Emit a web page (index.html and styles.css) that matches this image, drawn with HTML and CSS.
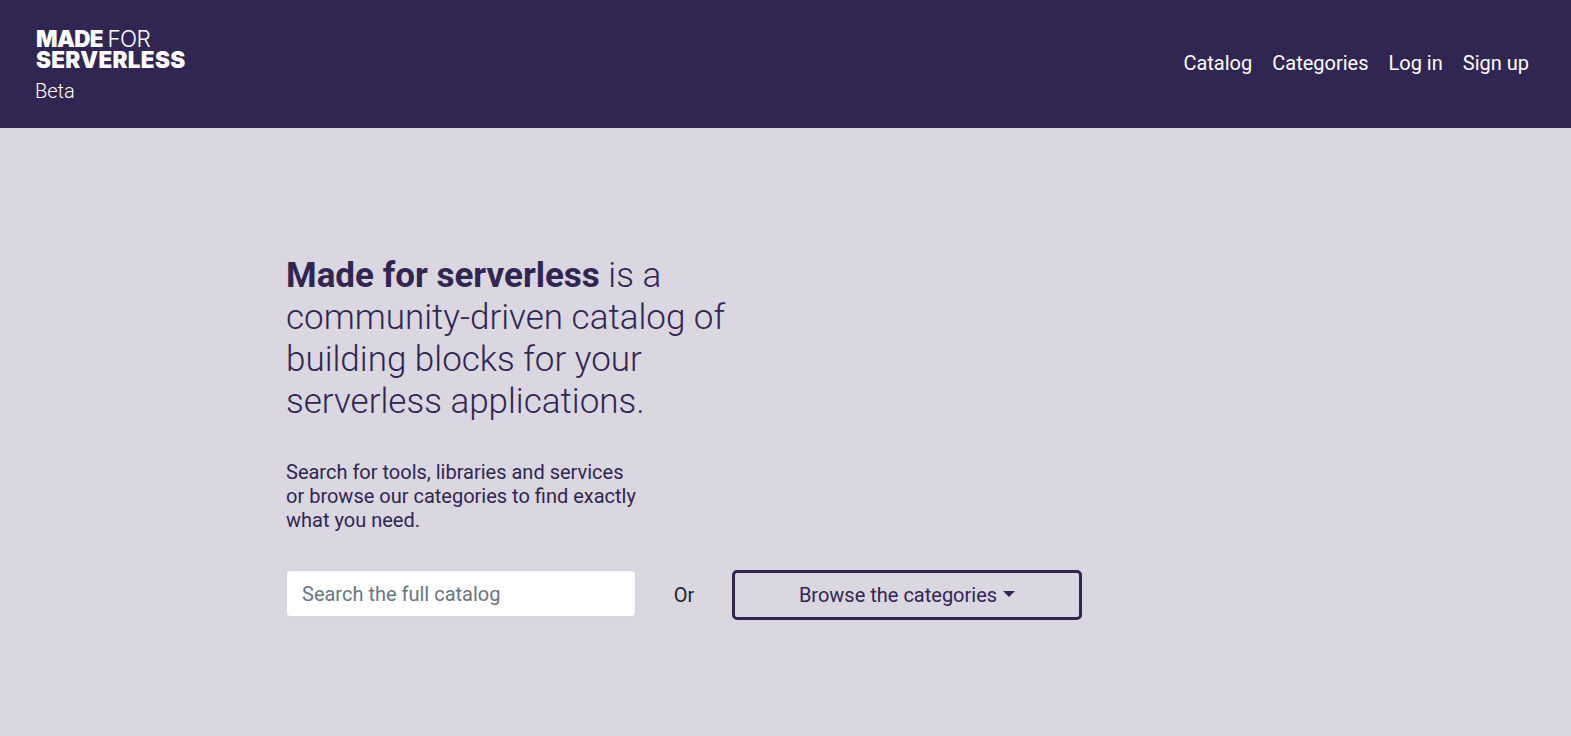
FILE: index.html
```html
<!DOCTYPE html>
<html lang="en">
<head>
  <meta charset="UTF-8">
  <meta name="viewport" content="width=device-width, initial-scale=1.0">
  <title>Made for serverless</title>
  <link rel="stylesheet" href="styles.css">
</head>
<body>
  <header class="site-header">
    <a class="brand" href="#">
      <span class="brand-logo">
        <span class="brand-line"><b class="brand-made">MADE</b> <i>FOR</i></span>
        <span class="brand-line"><b>SERVERLESS</b></span>
      </span>
      <span class="brand-tag">Beta</span>
    </a>
    <nav class="site-nav">
      <a href="#">Catalog</a>
      <a href="#">Categories</a>
      <a href="#">Log in</a>
      <a href="#">Sign up</a>
    </nav>
  </header>

  <main class="hero">
    <h1 class="hero-title"><strong>Made for serverless</strong> <span>is a community-driven catalog of building blocks for your serverless applications.</span></h1>
    <p class="hero-text">Search for tools, libraries and services<br>or browse our categories to find exactly<br>what you need.</p>
    <div class="hero-actions">
      <input class="search-input" type="text" placeholder="Search the full catalog">
      <span class="or-label">Or</span>
      <button class="browse-button" type="button">Browse the categories<span class="caret"></span></button>
    </div>
  </main>
</body>
</html>
```

FILE: styles.css
```css
html, body {
  margin: 0;
  padding: 0;
}
body {
  font-family: Roboto, "Liberation Sans", sans-serif;
  background-color: #dad7e1;
  color: #312551;
  min-height: 736px;
}
a {
  color: inherit;
  text-decoration: none;
}
.site-header {
  display: flex;
  justify-content: space-between;
  align-items: flex-start;
  box-sizing: border-box;
  height: 128px;
  padding: 28px 42px 0 36px;
  background-color: #312551;
  color: #fff;
}
.brand {
  display: block;
}
.brand-logo {
  display: block;
  font-family: Inter, Roboto, sans-serif;
  font-size: 22.5px;
  font-weight: 300;
  line-height: 21px;
}
.brand-line {
  display: block;
}
.brand-line b {
  font-weight: 900;
  letter-spacing: 0.3px;
}
.brand-line .brand-made {
  letter-spacing: -0.6px;
}
.brand-line i {
  font-style: normal;
  margin-left: -2px;
  letter-spacing: -0.6px;
}
.brand-tag {
  display: block;
  margin: 10px 0 0 -1px;
  font-size: 20px;
  font-weight: 300;
  line-height: 22px;
}
.site-nav {
  display: flex;
  gap: 20px;
  margin-top: 22px;
  font-size: 20px;
  line-height: 26px;
}
.hero {
  padding: 127px 0 0 286px;
}
.hero-title {
  width: 470px;
  margin: 0;
  font-size: 35px;
  font-weight: 300;
  line-height: 42px;
}
.hero-title strong {
  font-weight: 700;
}
.hero-text {
  margin: 37px 0 0;
  font-size: 20px;
  line-height: 24px;
}
.hero-actions {
  display: flex;
  align-items: flex-start;
  margin-top: 38px;
}
.search-input {
  box-sizing: border-box;
  width: 350px;
  height: 47px;
  padding: 0 15px;
  border: 1px solid #d5d3dc;
  border-radius: 4px;
  background-color: #fff;
  font-family: inherit;
  font-size: 20px;
  color: #495057;
}
.search-input::placeholder {
  color: #6c757d;
  opacity: 1;
}
.or-label {
  width: 96px;
  align-self: center;
  text-align: center;
  font-size: 20px;
  color: #212529;
}
.browse-button {
  box-sizing: border-box;
  width: 350px;
  height: 50px;
  border: 3px solid #312551;
  border-radius: 5px;
  background: transparent;
  color: #312551;
  font-family: inherit;
  font-size: 20px;
  cursor: pointer;
}
.caret {
  display: inline-block;
  margin-left: 6px;
  vertical-align: 5px;
  border-top: 6px solid #312551;
  border-left: 6px solid transparent;
  border-right: 6px solid transparent;
}
```
